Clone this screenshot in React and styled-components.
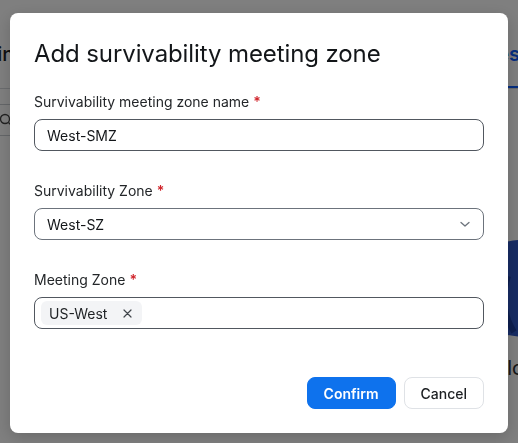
import React from "react";
import styled, { createGlobalStyle } from "styled-components";

const GlobalStyle = createGlobalStyle`
  html, body {
    margin: 0;
    padding: 0;
    width: 518px;
    height: 443px;
    overflow: hidden;
    font-family: Inter, "Noto Sans", "Liberation Sans", sans-serif;
  }
  * { box-sizing: border-box; }
`;

/* page behind the dialog */
const Page = styled.div`
  position: relative;
  width: 518px;
  height: 443px;
  background: #ffffff;
  overflow: hidden;
`;

const PageHeader = styled.div`
  display: flex;
  justify-content: space-between;
  align-items: flex-end;
  height: 89px;
  border-bottom: 1px solid #d6d9dd;
`;

const PageTitle = styled.div`
  margin-left: -47px;
  margin-bottom: 22px;
  font-size: 20px;
  font-weight: 500;
  color: #1d1f22;
  white-space: nowrap;
`;

const Tab = styled.div`
  margin-right: -2px;
  padding-bottom: 20px;
  font-size: 20px;
  font-weight: 600;
  color: #0b5cff;
  border-bottom: 2px solid #0b5cff;
  white-space: nowrap;
`;

const SearchRow = styled.div`
  display: flex;
  align-items: center;
  height: 32px;
  margin-top: 15px;
  width: 120px;
  margin-left: -10px;
  padding-left: 8px;
  border: 1px solid #c9cdd2;
  border-radius: 6px;
  color: #444;
`;

const SideArt = styled.div`
  display: flex;
  flex-direction: column;
  align-items: flex-end;
  margin-top: 100px;
  margin-right: -30px;
`;

const SideCaption = styled.div`
  margin-top: 10px;
  font-size: 20px;
  color: #2b2d30;
  margin-right: 24px;
`;

/* dialog */
const Overlay = styled.div`
  position: fixed;
  inset: 0;
  background: rgba(0, 0, 0, 0.5);
  display: flex;
  align-items: flex-start;
  padding: 13px 10px 10px 10px;
`;

const Dialog = styled.div`
  width: 498px;
  height: 420px;
  background: #ffffff;
  border-radius: 8px;
  box-shadow: 0 4px 16px rgba(0, 0, 0, 0.18);
  padding: 25px 24px 24px 24px;
  display: flex;
  flex-direction: column;
`;

const Title = styled.h1`
  margin: 0 0 22px 0;
  font-size: 24px;
  line-height: 32px;
  font-weight: 400;
  color: #131619;
  letter-spacing: -0.1px;
`;

const Field = styled.div`
  display: flex;
  flex-direction: column;
  margin-bottom: 30px;
`;

const Label = styled.label`
  font-size: 14px;
  line-height: 20px;
  color: #232629;
  margin-bottom: 7px;
`;

const Required = styled.span`
  color: #d0242b;
  margin-left: 4px;
  font-weight: 600;
`;

const Box = styled.div`
  display: flex;
  align-items: center;
  height: 32px;
  border: 1px solid ${(p) => (p.$light ? "#6c737c" : "#51575f")};
  border-radius: 8px;
  padding: 0 ${(p) => (p.$tags ? "4px" : "12px")};
  font-size: 14px;
  color: #131619;
`;

const Value = styled.span`
  flex: 1;
`;

const Chip = styled.span`
  display: inline-flex;
  align-items: center;
  gap: 16px;
  height: 24px;
  padding: 0 10px 0 8px;
  margin-left: 2px;
  border-radius: 6px;
  background: #f3f4f6;
  font-size: 14px;
  color: #1e2124;
`;

const Footer = styled.div`
  margin-top: auto;
  display: flex;
  justify-content: flex-end;
  gap: 8px;
`;

const Button = styled.button`
  height: 32px;
  padding: 0 16px;
  border-radius: 8px;
  font-family: inherit;
  font-size: 14px;
  cursor: pointer;
  border: 1px solid ${(p) => (p.$primary ? "#0e72ed" : "#dfe2e6")};
  background: ${(p) => (p.$primary ? "#0e72ed" : "#ffffff")};
  color: ${(p) => (p.$primary ? "#ffffff" : "#1c1f22")};
  font-weight: ${(p) => (p.$primary ? 600 : 500)};
`;

const Chevron = () => (
  <svg width="12" height="12" viewBox="0 0 12 12" fill="none">
    <path d="M2 4.5 L6 8 L10 4.5" stroke="#6c737c" strokeWidth="1.3" strokeLinecap="round" strokeLinejoin="round" />
  </svg>
);

const Close = () => (
  <svg width="9" height="9" viewBox="0 0 9 9" fill="none">
    <path d="M1 1 L8 8 M8 1 L1 8" stroke="#40454b" strokeWidth="1.2" strokeLinecap="round" />
  </svg>
);

const Search = () => (
  <svg width="14" height="14" viewBox="0 0 14 14" fill="none">
    <circle cx="6" cy="6" r="4.5" stroke="#444" strokeWidth="1.3" />
    <path d="M9.5 9.5 L13 13" stroke="#444" strokeWidth="1.3" />
  </svg>
);

const Art = () => (
  <svg width="60" height="110" viewBox="0 0 60 110">
    <path d="M4 10 Q30 0 60 6 L60 100 Q20 104 2 92 Z" fill="#2f58c7" />
    <path d="M20 40 Q10 70 26 96" stroke="#1c3e9e" strokeWidth="6" fill="none" />
    <polygon points="0,8 10,2 10,16" fill="#f2b631" />
  </svg>
);

export default function App() {
  return (
    <>
      <GlobalStyle />
      <Page>
        <PageHeader>
          <PageTitle>Admin</PageTitle>
          <Tab>Zones</Tab>
        </PageHeader>
        <SearchRow>
          <Search />
        </SearchRow>
        <SideArt>
          <Art />
          <SideCaption>Hello</SideCaption>
        </SideArt>
        <Overlay>
          <Dialog>
            <Title>Add survivability meeting zone</Title>
            <Field>
              <Label>
                Survivability meeting zone name<Required>*</Required>
              </Label>
              <Box>
                <Value>West-SMZ</Value>
              </Box>
            </Field>
            <Field>
              <Label>
                Survivability Zone<Required>*</Required>
              </Label>
              <Box $light>
                <Value>West-SZ</Value>
                <Chevron />
              </Box>
            </Field>
            <Field>
              <Label>
                Meeting Zone<Required>*</Required>
              </Label>
              <Box $tags>
                <Chip>
                  US-West
                  <Close />
                </Chip>
              </Box>
            </Field>
            <Footer>
              <Button $primary>Confirm</Button>
              <Button>Cancel</Button>
            </Footer>
          </Dialog>
        </Overlay>
      </Page>
    </>
  );
}
